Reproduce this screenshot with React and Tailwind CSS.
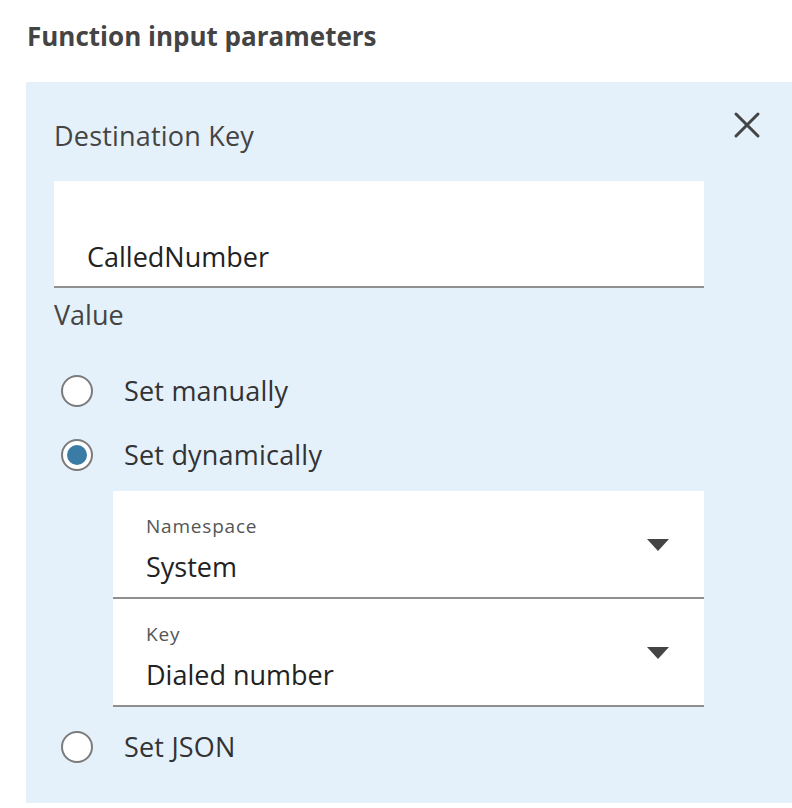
import { X } from 'lucide-react';

const Radio = ({ checked, label }) => (
  <div className="h-[64px] flex items-center">
    <div className="w-[32px] h-[32px] ml-[7px] rounded-full border-2 border-[#7b7b7b] bg-white flex items-center justify-center">
      {checked && <div className="w-[20px] h-[20px] rounded-full bg-[#3a7ca5]" />}
    </div>
    <span className="ml-[31px] text-[27px] tracking-[0.2px] text-[#333]">{label}</span>
  </div>
);

const SelectField = ({ label, value }) => (
  <div className="relative h-[108px] bg-white border-b-2 border-[#8f8f8f] pl-[33px] pt-[23px]">
    <div className="text-[19px] leading-[24px] tracking-[0.8px] text-[#555]">{label}</div>
    <div className="mt-[13px] text-[27px] leading-[32px] text-[#222]">{value}</div>
    {/* caret */}
    <svg className="absolute right-[35px] top-[48px]" width="22" height="12" viewBox="0 0 22 12">
      <path d="M0 0 H22 L11 12 Z" fill="#444" />
    </svg>
  </div>
);

export default function App() {
  return (
    <div className="w-[792px] h-[808px] bg-white overflow-hidden font-['Open_Sans',sans-serif]">
      <div className="h-[82px] pl-[27px] pt-[19px]">
        <h2 className="text-[26px] leading-[34px] font-bold text-[#444]">
          Function input parameters
        </h2>
      </div>

      <div className="relative ml-[26px] h-[721px] bg-[#e4f1fb] pl-[28px] pr-[88px]">
        <button className="absolute left-[699px] top-[21px] flex text-[#444]">
          <X size={44} strokeWidth={1.65} />
        </button>

        <div className="h-[99px] pt-[38px]">
          <div className="text-[27px] leading-[32px] tracking-[0.2px] text-[#444]">Destination Key</div>
        </div>

        <div className="h-[107px] bg-white border-b-2 border-[#8f8f8f] pl-[33px] pt-[59px]">
          <span className="block text-[27px] leading-[34px] text-[#222]">CalledNumber</span>
        </div>

        <div className="h-[54px] flex items-center">
          <span className="text-[27px] text-[#444]">Value</span>
        </div>

        <div className="mt-[17px]">
          <Radio label="Set manually" />
          <Radio checked label="Set dynamically" />
        </div>

        <div className="mt-[4px] ml-[59px]">
          <SelectField label="Namespace" value="System" />
          <SelectField label="Key" value="Dialed number" />
        </div>

        <div className="mt-[8px]">
          <Radio label="Set JSON" />
        </div>
      </div>
    </div>
  );
}
